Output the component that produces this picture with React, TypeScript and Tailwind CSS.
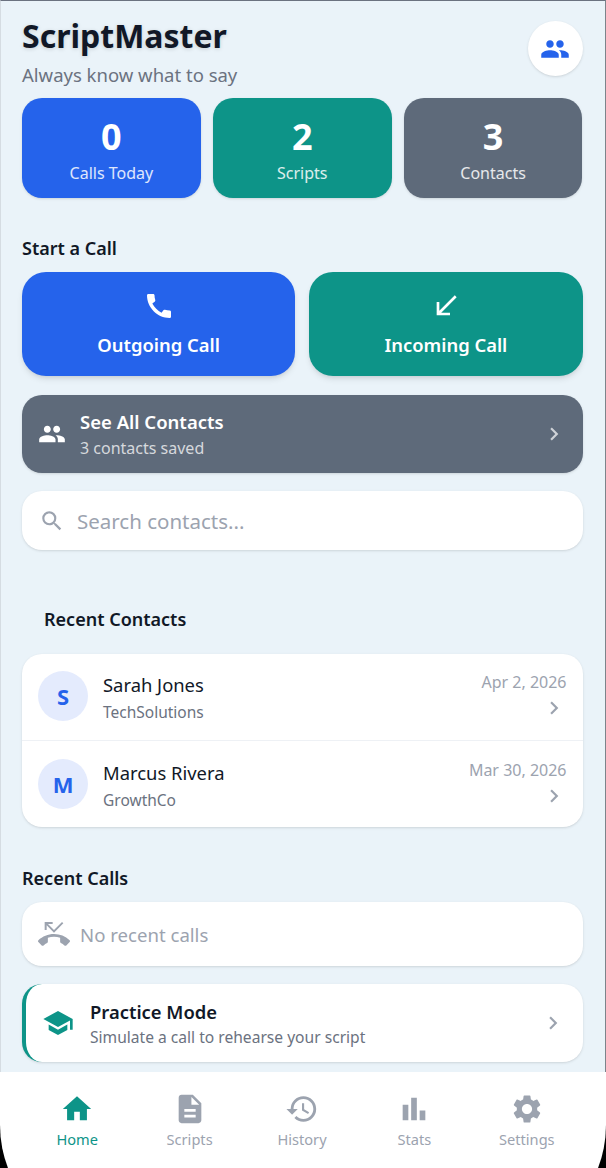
import { MdPeople, MdCall, MdCallReceived, MdChevronRight, MdSearch, MdPhoneMissed, MdSchool, MdHome, MdDescription, MdHistory, MdBarChart, MdSettings } from "react-icons/md";
import type { IconType } from "react-icons";

const navItems: { label: string; icon: IconType; active?: boolean }[] = [
  { label: "Home", icon: MdHome, active: true },
  { label: "Scripts", icon: MdDescription },
  { label: "History", icon: MdHistory },
  { label: "Stats", icon: MdBarChart },
  { label: "Settings", icon: MdSettings },
];

const contacts = [
  { initial: "S", name: "Sarah Jones", company: "TechSolutions", date: "Apr 2, 2026" },
  { initial: "M", name: "Marcus Rivera", company: "GrowthCo", date: "Mar 30, 2026" },
];

function StatCard({ value, label, color }: { value: string; label: string; color: string }) {
  return (
    <div className={`flex h-[100px] flex-1 flex-col items-center rounded-[20px] pt-[16px] shadow-sm ${color}`}>
      <div className="text-[36px] leading-[46px] font-bold text-white">{value}</div>
      <div className="mt-[1px] text-[16px] leading-[24px] text-white/85">{label}</div>
    </div>
  );
}

function CallButton({ label, color, icon: Icon }: { label: string; color: string; icon: IconType }) {
  return (
    <div className={`flex h-[104px] flex-1 flex-col items-center rounded-3xl pt-[18px] shadow-md ${color}`}>
      <Icon className="text-white" size={32} />
      <div className="mt-[8px] text-[18.4px] leading-[30px] font-semibold text-white">{label}</div>
    </div>
  );
}

export default function App() {
  return (
    <div className="flex h-[1168px] w-[606px] flex-col overflow-hidden bg-black font-['Noto_Sans',sans-serif]">
      <div className="h-[1072px] shrink-0 border-x border-t border-t-[#6b7280] border-r-[#7d848b] border-l-[#d5dce2] bg-[#eaf3f9] pt-[15px] pr-[22.5px] pl-[21px]">
        <div className="flex justify-between">
          <div>
            <h1 className="text-[32px] leading-[40px] font-bold text-[#111827] [text-shadow:0_1px_4px_rgba(0,0,0,0.15)]">ScriptMaster</h1>
            <p className="mt-[6px] text-[18.5px] leading-[26px] text-[#6b7280]">Always know what to say</p>
          </div>
          <div className="mt-[5px] flex h-[55px] w-[55px] items-center justify-center rounded-full bg-white shadow-sm">
            <MdPeople className="text-[#2563eb]" size={30} />
          </div>
        </div>

        <div className="mt-[10px] flex gap-[12px]">
          <StatCard value="0" label="Calls Today" color="bg-[#2563eb]" />
          <StatCard value="2" label="Scripts" color="bg-[#0d9488]" />
          <StatCard value="3" label="Contacts" color="bg-[#5e6a7a]" />
        </div>

        <h2 className="mt-[36px] text-[18px] leading-[28px] font-semibold text-[#111827]">Start a Call</h2>
        <div className="mt-[10px] flex gap-[14px]">
          <CallButton label="Outgoing Call" color="bg-[#2563eb]" icon={MdCall} />
          <CallButton label="Incoming Call" color="bg-[#0d9488]" icon={MdCallReceived} />
        </div>

        <div className="mt-[19px] flex h-[78px] items-center rounded-[20px] bg-[#5e6a7a] px-[16px] shadow-sm">
          <MdPeople className="text-white" size={28} />
          <div className="ml-[14px] flex-1 pt-[2px]">
            <div className="text-[18.5px] leading-[26px] font-semibold text-white">See All Contacts</div>
            <div className="text-[16px] leading-[26px] text-white/75">3 contacts saved</div>
          </div>
          <MdChevronRight className="text-white/70" size={26} />
        </div>

        <div className="mt-[18px] flex h-[59px] items-center rounded-[20px] bg-white pl-[17px] shadow-sm">
          <MdSearch className="text-[#9ca3af]" size={26} />
          <span className="ml-[12px] pt-[2px] text-[20.5px] text-[#9ca3af]">Search contacts...</span>
        </div>

        <h2 className="mt-[55px] pl-[22px] text-[18px] leading-[28px] font-semibold text-[#111827]">Recent Contacts</h2>

        <div className="mt-[21px] rounded-[20px] bg-white shadow-sm">
          {contacts.map((c, i) => (
            <div key={c.name} className={`flex items-center px-[16px] ${i === 0 ? "h-[87px] border-b border-[#eef1f5] pb-[2px]" : "h-[86px]"}`}>
              <div className="flex h-[50px] w-[50px] items-center justify-center rounded-full bg-[#e4ebfd] text-[22px] font-bold text-[#2563eb]">{c.initial}</div>
              <div className="ml-[15px] flex-1 pt-[3px]">
                <div className="text-[18.4px] leading-[28px] text-[#111827]">{c.name}</div>
                <div className="text-[15.5px] leading-[26px] text-[#6b7280]">{c.company}</div>
              </div>
              <div className="mb-[1px] flex flex-col items-end">
                <div className="text-[16px] leading-[24px] text-[#9ca3af]">{c.date}</div>
                <MdChevronRight className="mt-[1px] text-[#9ca3af]" size={26} />
              </div>
            </div>
          ))}
        </div>

        <h2 className="mt-[37px] text-[18px] leading-[28px] font-semibold text-[#111827]">Recent Calls</h2>

        <div className="mt-[10px] flex h-[64px] items-center rounded-[20px] bg-white pl-[16px] shadow-sm">
          <MdPhoneMissed className="text-[#9ca3af]" size={32} />
          <span className="ml-[10px] pt-[2px] text-[18.6px] text-[#9ca3af]">No recent calls</span>
        </div>

        <div className="mt-[18px] flex h-[78px] items-center rounded-[20px] border-l-[4px] border-[#0d9488] bg-white pr-[17px] pl-[16px] shadow-sm">
          <MdSchool className="text-[#0d9488]" size={32} />
          <div className="ml-[16px] flex-1 pt-[2px]">
            <div className="text-[18.4px] leading-[26px] font-semibold text-[#111827]">Practice Mode</div>
            <div className="text-[15.6px] leading-[24px] text-[#6b7280]">Simulate a call to rehearse your script</div>
          </div>
          <MdChevronRight className="text-[#9ca3af]" size={26} />
        </div>
      </div>

      <nav className="flex h-[173px] shrink-0 rounded-b-[120px] bg-white pt-[20px] pr-[23px] pl-[21px]">
        {navItems.map((item) => (
          <div key={item.label} className="flex flex-1 flex-col items-center">
            <item.icon className={item.active ? "text-[#0d9488]" : "text-[#9ca3af]"} size={34} />
            <span className={`mt-[3px] text-[14.6px] leading-[20px] ${item.active ? "text-[#0d9488]" : "text-[#9ca3af]"}`}>{item.label}</span>
          </div>
        ))}
      </nav>
    </div>
  );
}
